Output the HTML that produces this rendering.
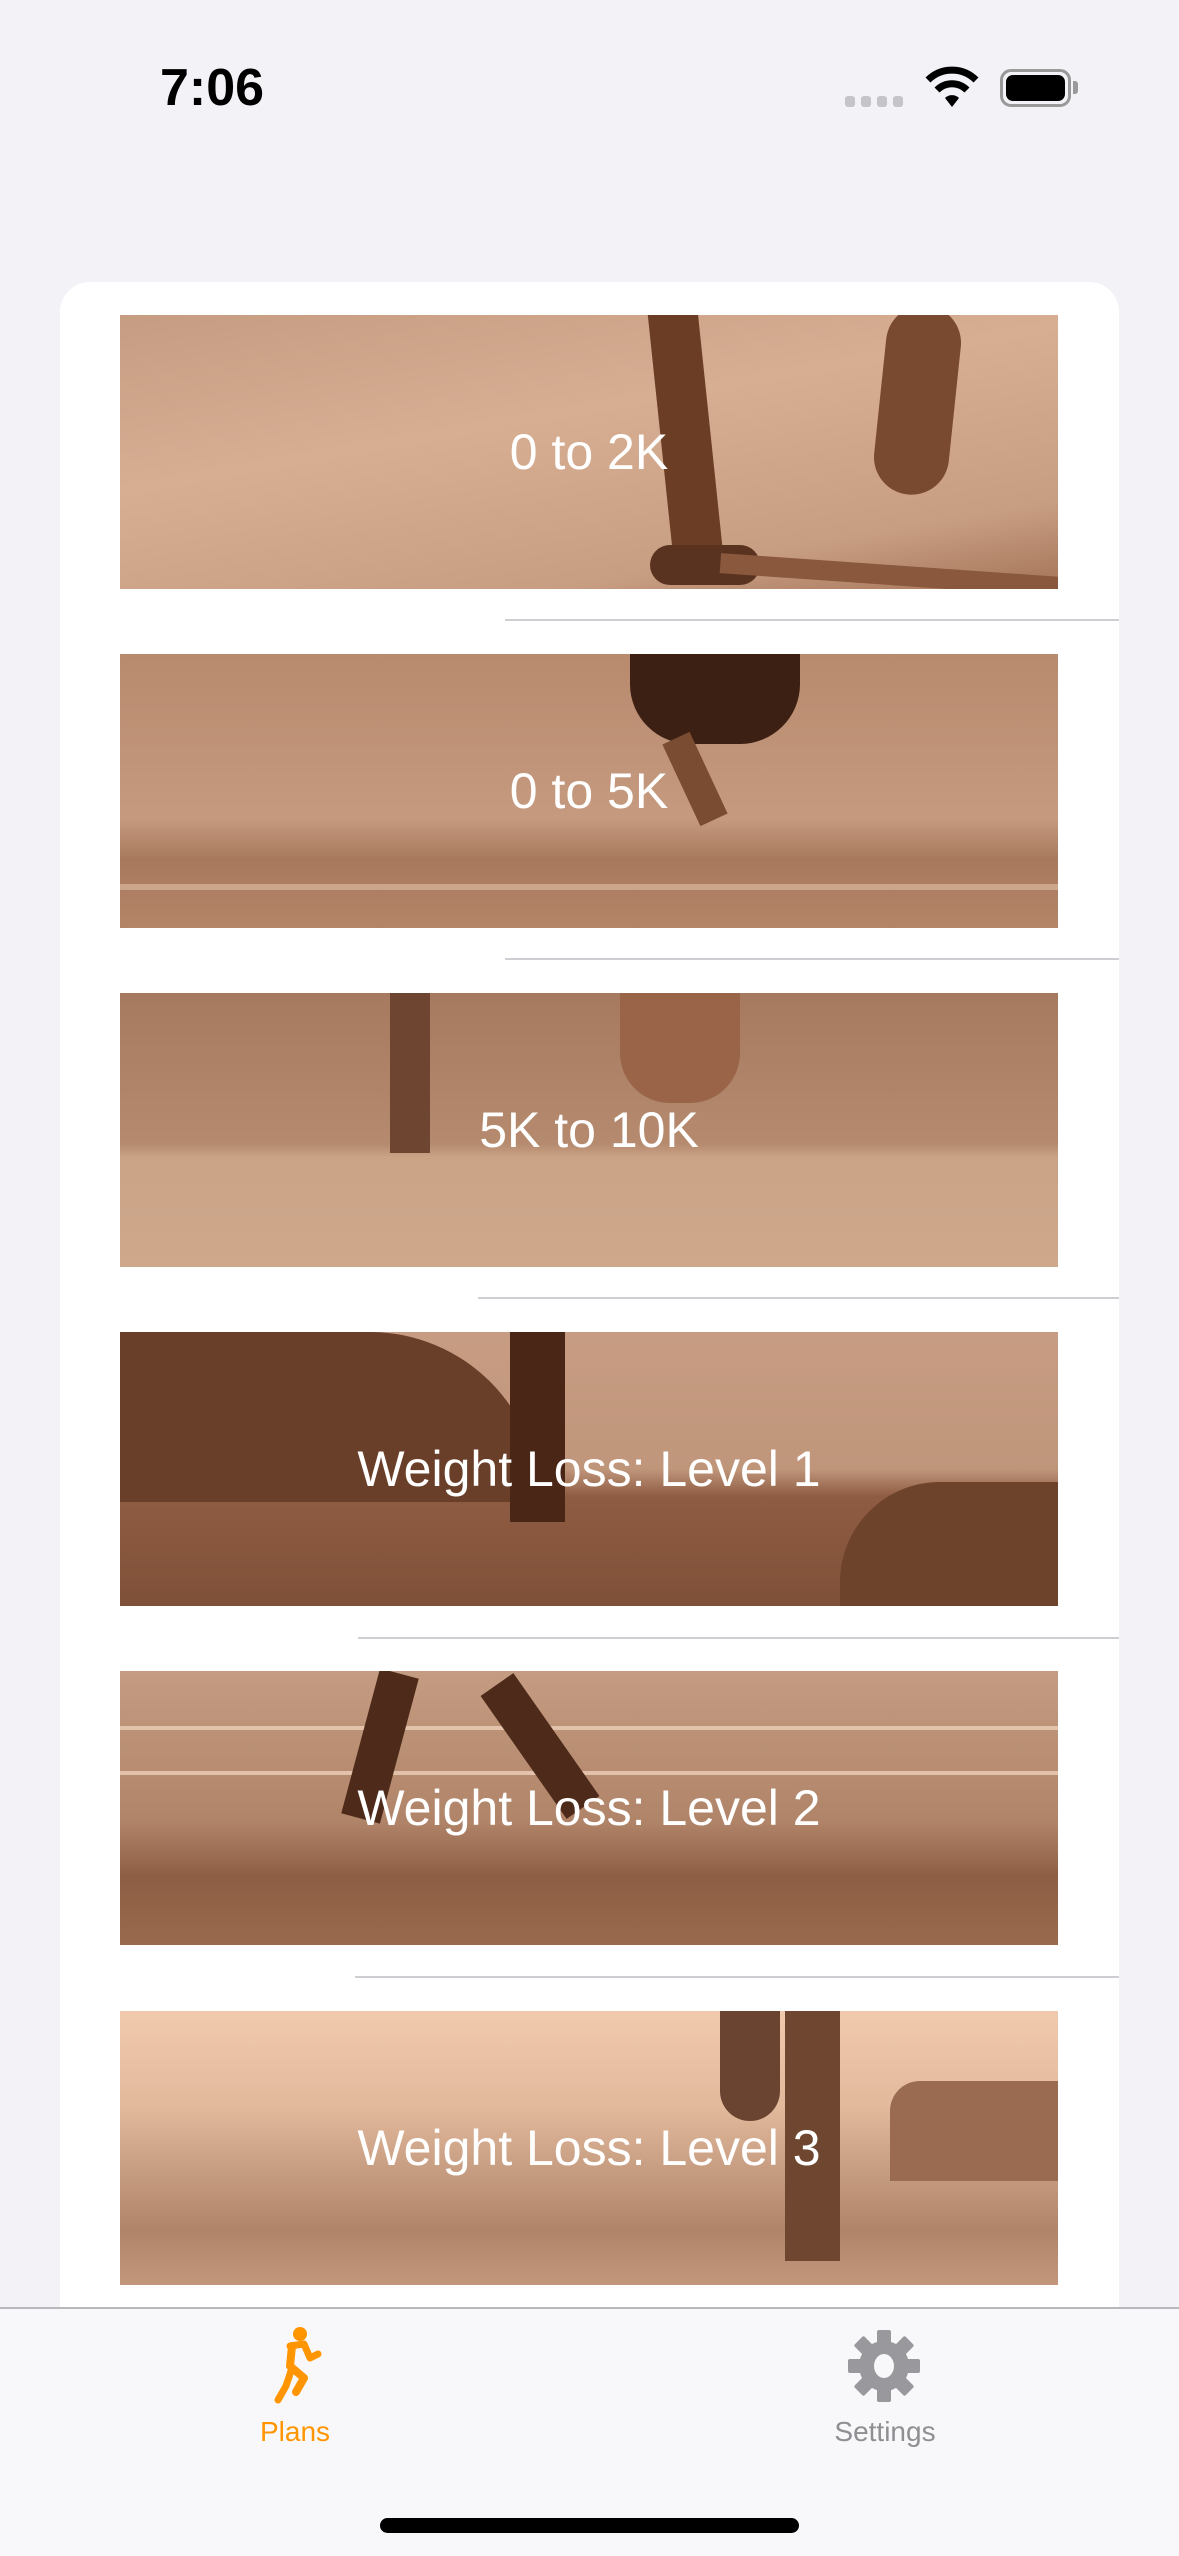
<!DOCTYPE html>
<html><head><meta charset="utf-8"><style>
*{margin:0;padding:0;box-sizing:border-box}
body{width:1179px;height:2556px;background:#f2f2f7;position:relative;overflow:hidden;font-family:"Liberation Sans",sans-serif}
.card{position:absolute;left:60px;top:282px;width:1059px;height:2060px;background:#fff;border-radius:30px}
.img{position:absolute;left:120px;width:938px;height:274px;overflow:hidden;color:#fff;font-size:50px;display:flex;align-items:center;justify-content:center}
.img span{position:relative;z-index:2}
.sep{position:absolute;right:60px;height:1.5px;background:#cfcfd3}
.tab{position:absolute;left:0;top:2307px;width:1179px;height:249px;background:#f8f8fa;border-top:2px solid #b8b8bc}
</style></head><body>
<div style="position:absolute;left:160px;top:58px;font-size:52px;font-weight:bold;color:#000">7:06</div>
<div style="position:absolute;left:845px;top:96px;display:flex;gap:6px"><i style="width:10px;height:11px;background:#c5c5c9;border-radius:3px"></i><i style="width:10px;height:11px;background:#c5c5c9;border-radius:3px"></i><i style="width:10px;height:11px;background:#c5c5c9;border-radius:3px"></i><i style="width:10px;height:11px;background:#c5c5c9;border-radius:3px"></i></div>
<svg style="position:absolute;left:925px;top:66px" width="54" height="42" viewBox="0 0 54 42"><path d="M3 14 A34 34 0 0 1 51 14" stroke="#000" stroke-width="7" fill="none"/><path d="M12 24 A21 21 0 0 1 42 24" stroke="#000" stroke-width="7" fill="none"/><path d="M20 32 L27 41 L34 32 A10 10 0 0 0 20 32Z" fill="#000"/></svg>
<div style="position:absolute;left:1000px;top:69px;width:71px;height:38px;border:3px solid #999;border-radius:11px;padding:3px"><div style="width:100%;height:100%;background:#000;border-radius:7px"></div></div>
<div style="position:absolute;left:1073px;top:81px;width:5px;height:13px;background:#999;border-radius:0 3px 3px 0"></div>

<div class="card"></div>

<div class="img" style="top:315px;background:linear-gradient(170deg,#c69d82 0%,#d8ae93 40%,#c89e83 80%,#a57458 100%)">
<div style="position:absolute;left:540px;top:-10px;width:50px;height:250px;background:#6a3d24;transform:rotate(-6deg)"></div>
<div style="position:absolute;left:760px;top:-10px;width:75px;height:190px;background:#7a4a30;border-radius:40px;transform:rotate(6deg)"></div>
<div style="position:absolute;left:530px;top:230px;width:110px;height:40px;background:#5a3320;border-radius:20px"></div>
<div style="position:absolute;left:600px;top:250px;width:340px;height:20px;background:#8a583c;transform:rotate(4deg)"></div>
<span>0 to 2K</span></div>
<div class="sep" style="top:619px;left:505px"></div>

<div class="img" style="top:654px;background:linear-gradient(180deg,#b88a6e 0%,#c59a7f 60%,#a8795d 75%,#b48567 100%)">
<div style="position:absolute;left:510px;top:0;width:170px;height:90px;background:#3d2014;border-radius:0 0 60px 60px"></div>
<div style="position:absolute;left:560px;top:80px;width:30px;height:90px;background:#7a4d33;transform:rotate(-25deg)"></div>
<div style="position:absolute;left:0;top:230px;width:938px;height:6px;background:#e0c0a8;opacity:.6"></div>
<span>0 to 5K</span></div>
<div class="sep" style="top:958px;left:505px"></div>

<div class="img" style="top:993px;background:linear-gradient(180deg,#a67a5f 0%,#b58a6e 55%,#caa387 60%,#cfa88c 100%)">
<div style="position:absolute;left:270px;top:0;width:40px;height:160px;background:#6e4530"></div>
<div style="position:absolute;left:500px;top:0;width:120px;height:110px;background:#9a6448;border-radius:0 0 50px 50px"></div>
<span>5K to 10K</span></div>
<div class="sep" style="top:1297px;left:478px"></div>

<div class="img" style="top:1332px;background:linear-gradient(180deg,#c79c82 0%,#c0967b 50%,#8e5c42 60%,#7f5038 100%)">
<div style="position:absolute;left:0;top:0;width:420px;height:170px;background:#6a3f2a;border-radius:0 200px 0 0"></div>
<div style="position:absolute;left:390px;top:0;width:55px;height:190px;background:#4a2616"></div>
<div style="position:absolute;left:720px;top:150px;width:220px;height:130px;background:#6e432c;border-radius:100px 0 0 0"></div>
<span>Weight Loss: Level 1</span></div>
<div class="sep" style="top:1637px;left:358px"></div>

<div class="img" style="top:1671px;background:linear-gradient(180deg,#c59c82 0%,#b08468 55%,#8e5e44 75%,#9a6a4e 100%)">
<div style="position:absolute;left:0;top:55px;width:938px;height:4px;background:#e2c2aa"></div>
<div style="position:absolute;left:0;top:100px;width:938px;height:4px;background:#e2c2aa"></div>
<div style="position:absolute;left:240px;top:0;width:40px;height:150px;background:#4e2a1a;transform:rotate(15deg)"></div>
<div style="position:absolute;left:400px;top:0;width:40px;height:150px;background:#4e2a1a;transform:rotate(-35deg)"></div>
<span>Weight Loss: Level 2</span></div>
<div class="sep" style="top:1976px;left:355px"></div>

<div class="img" style="top:2011px;background:linear-gradient(180deg,#f1c9ad 0%,#e3b99c 35%,#c59b80 60%,#b08468 80%,#c2977b 100%)">
<div style="position:absolute;left:600px;top:0;width:60px;height:110px;background:#6a4430;border-radius:0 0 30px 30px"></div>
<div style="position:absolute;left:665px;top:0;width:55px;height:250px;background:#6f4630"></div>
<div style="position:absolute;left:770px;top:70px;width:168px;height:100px;background:#9a6b50;border-radius:30px 0 0 0"></div>
<span>Weight Loss: Level 3</span></div>

<div class="tab">
<svg style="position:absolute;left:264px;top:17px" width="62" height="78" viewBox="0 0 62 78"><circle cx="36" cy="8" r="7" fill="#ff9500"/><path d="M26 20 L40 18 L46 32 L54 28" stroke="#ff9500" stroke-width="7" fill="none" stroke-linecap="round" stroke-linejoin="round"/><path d="M28 20 L26 40 L40 52 L32 66" stroke="#ff9500" stroke-width="8" fill="none" stroke-linecap="round" stroke-linejoin="round"/><path d="M28 42 L22 60 L14 74" stroke="#ff9500" stroke-width="7" fill="none" stroke-linecap="round"/></svg>
<div style="position:absolute;left:225px;top:107px;width:140px;text-align:center;font-size:28px;color:#ff9500">Plans</div>
<svg style="position:absolute;left:847px;top:20px" width="74" height="74" viewBox="-37 -37 74 74"><g fill="#98989d"><circle r="25"/><g id="t"><rect x="-7" y="-36" width="14" height="14" rx="2"/></g><use href="#t" transform="rotate(45)"/><use href="#t" transform="rotate(90)"/><use href="#t" transform="rotate(135)"/><use href="#t" transform="rotate(180)"/><use href="#t" transform="rotate(225)"/><use href="#t" transform="rotate(270)"/><use href="#t" transform="rotate(315)"/></g><ellipse rx="10" ry="12" fill="#f8f8fa"/></svg>
<div style="position:absolute;left:800px;top:107px;width:170px;text-align:center;font-size:28px;color:#8e8e93">Settings</div>
<div style="position:absolute;left:380px;top:209px;width:419px;height:15px;background:#000;border-radius:8px"></div>
</div>
</body></html>
